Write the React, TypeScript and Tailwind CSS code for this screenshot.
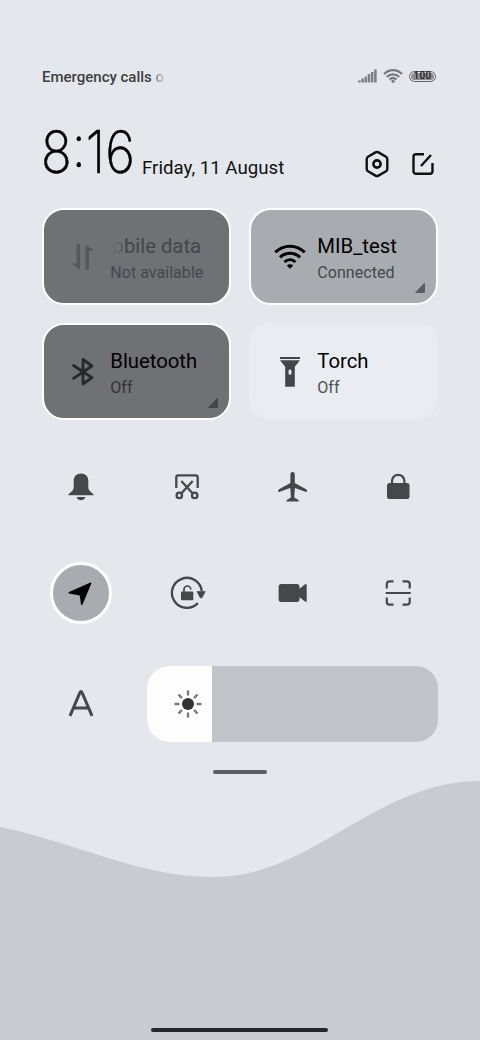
import React from "react";

type IconProps = { className?: string; children: React.ReactNode; w: number; h: number };

function Icon({ w, h, className = "", children }: IconProps) {
  return (
    <svg width={w} height={h} viewBox={`0 0 ${w} ${h}`} className={`block shrink-0 ${className}`} fill="none">
      {children}
    </svg>
  );
}

function StatusBar() {
  return (
    <div className="flex h-6 items-center pl-[42px] pr-11">
      <div className="whitespace-nowrap pt-px text-[15px] font-medium leading-6 text-[#3d3f42]">
        Emergency calls <span className="bg-linear-to-r from-[#85878a] to-[#c5c8cc] bg-clip-text text-transparent">o</span>
      </div>
      <div className="ml-auto flex items-center gap-[6px]">
        <Icon w={19} h={14} className="text-[#7c7e81]">
          <path d="M1.400 13.500v-2M4.600 13.500V9.500M7.800 13.500V7.500M11 13.500V5M14.200 13.500V3M17.400 13.500V.500" stroke="currentColor" strokeWidth="2.500" />
        </Icon>
        <Icon w={20} h={14}>
          <path d="M1 5C6-.2 14-.2 19 5M3.800 7.900c3.600-3.500 8.800-3.500 12.400 0M6.600 10.600c2-1.900 4.800-1.900 6.800 0" stroke="#77797c" strokeWidth="2.200" />
          <circle cx="10" cy="12.300" r="1.600" fill="#77797c" />
        </Icon>
        <div className="flex h-[11px] w-[27px] items-center justify-center rounded-full border border-[#606265] p-px">
          <div className="flex h-[7px] w-full items-center justify-center rounded-full bg-[#8c8e91] text-[10px] font-medium leading-none tracking-[.3px] text-[#222325]">100</div>
        </div>
      </div>
    </div>
  );
}

function Header() {
  return (
    <div className="flex h-[60px] items-end pl-[41px] pr-[46px]">
      <div className="mb-[2px] w-[101px] origin-left scale-x-[.87] whitespace-nowrap font-[Inter] text-[58.500px] font-extralight leading-[60px] text-black [-webkit-text-stroke:.6px_black]">
        8:16
      </div>
      <div className="mb-[4px] whitespace-nowrap text-[18.700px] leading-6 text-[#111]">Friday, 11 August</div>
      <div className="mb-[6px] ml-auto flex items-center gap-[22px]">
        <Icon w={26} h={28}>
          <path d="M11.500 2.400a3 3 0 0 1 3 0l7.500 4.300a2.600 2.600 0 0 1 1.300 2.300v10a2.600 2.600 0 0 1-1.300 2.300l-7.500 4.300a3 3 0 0 1-3 0L4 21.300A2.600 2.600 0 0 1 2.700 19V9A2.600 2.600 0 0 1 4 6.700z" stroke="#111" strokeWidth="2.400" />
          <circle cx="13" cy="14" r="3.600" stroke="#111" strokeWidth="2.600" />
        </Icon>
        <Icon w={22} h={24}>
          <path d="M12 2.200H4A2.500 2.500 0 0 0 1.500 4.700v14.600A2.500 2.500 0 0 0 4 21.800h14a2.500 2.500 0 0 0 2.500-2.500V11M9 14l10-11" stroke="#111" strokeWidth="2.400" />
        </Icon>
      </div>
    </div>
  );
}

type TileProps = {
  tile: string;
  icon: React.ReactNode;
  title: React.ReactNode;
  sub: string;
  titleClass: string;
  subClass: string;
  corner?: string;
};

function Tile({ tile, icon, title, sub, titleClass, subClass, corner }: TileProps) {
  return (
    <div className={`relative flex h-[97px] items-center rounded-[22px] ${tile}`}>
      <div className="flex w-[65px] justify-end pt-px">
        <div className="flex w-[52px] justify-center">{icon}</div>
      </div>
      <div className="flex flex-col whitespace-nowrap pl-px pt-[3px]">
        <span className={`text-[20.300px] leading-[28px] ${titleClass}`}>{title}</span>
        <span className={`text-[16.100px] leading-[25px] ${subClass}`}>{sub}</span>
      </div>
      {corner && (
        <svg width="10" height="10" viewBox="0 0 10 10" className={`absolute bottom-[10px] right-[11px] ${corner}`}>
          <path d="M9 .3q1-.6 1 .7v7.500Q10 10 8.500 10H1Q-.300 10 .600 9z" fill="currentColor" />
        </svg>
      )}
    </div>
  );
}

function Tiles() {
  return (
    <div className="grid grid-cols-[189px_189px] gap-x-[18px] gap-y-[18px] pl-[42.300px]">
      <Tile
        tile="border-2 border-white bg-[#707175]"
        icon={
          <Icon w={24} h={28}>
            <path d="M9 1v25.500L.500 20.500H5.500V1zM14.500 27V1.500l8.500 6h-5V27z" fill="#55575a" />
          </Icon>
        }
        title={<><span className="bg-linear-to-r from-[#707175] to-[#55575b] bg-clip-text pl-[2px] text-transparent">o</span>bile data</>}
        sub="Not available"
        titleClass="text-[#444649]"
        subClass="text-[#46484b]"
      />
      <Tile
        tile="border-2 border-white bg-[#a8abb0]"
        icon={
          <Icon w={32} h={26}>
            <path d="M1.300 8.300C9.500.200 22.500.200 30.700 8.300M6 13.300c5.700-5.300 14.300-5.300 20 0M10.500 18c3.200-2.900 7.800-2.900 11 0" stroke="#000" strokeWidth="3" />
            <path d="M12.800 21.500q3.200-2.300 6.400 0L16 24.800z" fill="#000" />
          </Icon>
        }
        title="MIB_test"
        sub="Connected"
        titleClass="text-black"
        subClass="text-[#45474a]"
        corner="text-[#5c5e61]"
      />
      <Tile
        tile="border-2 border-white bg-[#707175]"
        icon={
          <Icon w={24} h={30}>
            <path d="m2.500 8.500 18.500 12.200-9 6.300V2.500l9 6.500L2.500 21.300" stroke="#27282a" strokeWidth="2.800" strokeLinejoin="round" strokeLinecap="round" />
          </Icon>
        }
        title="Bluetooth"
        sub="Off"
        titleClass="text-black"
        subClass="text-[#303134]"
        corner="text-[#434548]"
      />
      <Tile
        tile="border-2 border-[#e9edf2] bg-[#e9edf2]"
        icon={
          <Icon w={22} h={30}>
            <path d="M1 0h20v2H1zM1 3.300h20l-5.200 6.500v20H6.200v-20zM11 12.500a1.400 1.400 0 0 0-1.400 1.400v2.500a1.400 1.400 0 0 0 2.800 0v-2.500a1.400 1.400 0 0 0-1.400-1.400" fill="#434548" fillRule="evenodd" />
          </Icon>
        }
        title="Torch"
        sub="Off"
        titleClass="text-black"
        subClass="text-[#505255]"
      />
    </div>
  );
}

const INK = "#454749";

const toggles: { name: string; active?: boolean; art: React.ReactNode }[] = [
  {
    name: "sound",
    art: <path d="M20 3.500c4.500 0 7.300 3 7.300 7.300v6.500c0 3 2.500 4.600 5.200 7q.700 1-.5 1H8q-1.200 0-.5-1c2.700-2.400 5.200-4 5.200-7v-6.500c0-4.300 2.800-7.300 7.300-7.300zM15.800 27h8.400c0 4.200-8.400 4.200-8.400 0z" fill={INK} />,
  },
  {
    name: "screenshot",
    art: (
      <g stroke={INK} strokeWidth="2.300">
        <path d="M9.300 18V7.300Q9.300 5.300 11.300 5.300h17.400q2 0 2 2V18M14.300 11l11 12M25.700 11l-11 12" />
        <circle cx="12.300" cy="25.400" r="2.700" />
        <circle cx="27.700" cy="25.400" r="2.700" />
      </g>
    ),
  },
  {
    name: "airplane",
    art: <path d="M20.600 2q2.200 0 2.200 2.300V13l11.400 6.300q.9.500.9 2.300-.2.500-1 .3L22.900 18l-.6 9.500 3.800 2.200q.700.500.6 1.900H14.500q-.1-1.400.6-1.900l3.800-2.200-.6-9.500-11.200 3.900q-.8.200-1-.3 0-1.800.9-2.300L18.400 13V4.300Q18.400 2 20.600 2z" fill={INK} />,
  },
  {
    name: "lock",
    art: (
      <>
        <rect x="9" y="13" width="22.500" height="16" rx="2.500" fill={INK} />
        <path d="M14 14v-3a6.200 6.200 0 0 1 12.400 0v3" stroke={INK} strokeWidth="2.200" />
      </>
    ),
  },
  {
    name: "location",
    active: true,
    art: <path d="M29.500 9.500q1.200-.3.800 1L21.500 31.500q-1 1.500-1.500 0L18.700 22.500 8 20.500q-1.500-.6 0-1.500z" fill="#000" />,
  },
  {
    name: "rotation",
    art: (
      <>
        <path d="M30.800 30.200A15 15 0 1 1 34.800 18" stroke={INK} strokeWidth="2.400" />
        <path d="M30 18.500h8.200l-2.900 5.800q-1.200 1.500-2.400 0z" fill={INK} stroke={INK} strokeWidth=".7" strokeLinejoin="round" />
        <rect x="14" y="18.500" width="12.300" height="8.700" rx="1" fill={INK} />
        <path d="M17 19v-2.600a3.400 3.400 0 0 1 6.800 0" stroke={INK} strokeWidth="1.700" />
      </>
    ),
  },
  {
    name: "recorder",
    art: <path d="M9.300 11h15.500q2.700 0 2.700 2.700v2l5.600-4.500q1.600-.8 1.600.8v16q0 1.500-1.600.6L27.500 24.200v2.100q0 2.700-2.700 2.700H9.300q-2.700 0-2.700-2.700V13.700Q6.600 11 9.300 11z" fill={INK} />,
  },
  {
    name: "scan",
    art: <path d="M15.500 8.300h-4q-2.700 0-2.700 2.700v4.500M24.500 8.300h4.500q2.700 0 2.700 2.700v4.500M8.800 24.500V29q0 2.700 2.700 2.700h4M31.700 24.500V29q0 2.700-2.700 2.700h-4.500M7.700 20h25" stroke={INK} strokeWidth="2.200" />,
  },
];

function Toggles() {
  return (
    <div className="grid grid-cols-[repeat(4,62px)] gap-x-[43.700px] gap-y-[41px] pl-[50px]">
      {toggles.map((t) => (
        <div key={t.name} className={`flex size-[62px] items-center justify-center rounded-full ${t.active ? "border-3 border-white bg-[#a8abb0]" : ""}`}>
          <Icon w={40} h={40}>{t.art}</Icon>
        </div>
      ))}
    </div>
  );
}

function Brightness() {
  return (
    <div className="flex h-[76px] items-center pl-[61px] pr-[42px]">
      <Icon w={40} h={40}>
        <path d="M9 31.800 19 8.400q1-1.800 2 0L31 31.800M13 24h14" stroke={INK} strokeWidth="3" />
      </Icon>
      <div className="ml-[46px] flex h-[76px] flex-1 overflow-hidden rounded-[22px] bg-[#c1c4c9]">
        <div className="flex w-[64.500px] items-center justify-end bg-[#fdfdfd] pr-[8.500px]">
          <Icon w={30} h={30}>
            <circle cx="15" cy="15" r="6" fill="#333" />
            <path d="M15 2.500v3M15 24.500v3M2.500 15h3M24.500 15h3M6.200 6.200l2.100 2.100M21.700 21.700l2.100 2.100M6.200 23.800l2.100-2.100M21.700 8.300l2.100-2.100" stroke="#77797b" strokeWidth="2.400" strokeLinecap="round" />
          </Icon>
        </div>
      </div>
    </div>
  );
}

export default function App() {
  return (
    <main className="flex h-[1040px] w-[480px] flex-col overflow-hidden bg-[#e4e8ed] pt-[64px] font-[Roboto,sans-serif]">
      <StatusBar />
      <div className="mt-[36px]"><Header /></div>
      <div className="mt-[24px]"><Tiles /></div>
      <div className="mt-[39px]"><Toggles /></div>
      <div className="mt-[42px]"><Brightness /></div>
      <div className="mt-[28px] h-[4px] w-[54px] self-center rounded-full bg-[#5c5e61]" />
      <div className="mt-[7px] grid flex-1">
        <svg width="480" height="259" viewBox="0 0 480 259" className="col-start-1 row-start-1 block">
          <path d="M0 46C75 61 140 96 212 96C310 98 375 0 480 0V259H0z" fill="#c8cbd0" />
        </svg>
        <div className="col-start-1 row-start-1 mb-[8px] mr-px h-[4px] w-[177px] self-end justify-self-center rounded-full bg-[#26272a]" />
      </div>
    </main>
  );
}
